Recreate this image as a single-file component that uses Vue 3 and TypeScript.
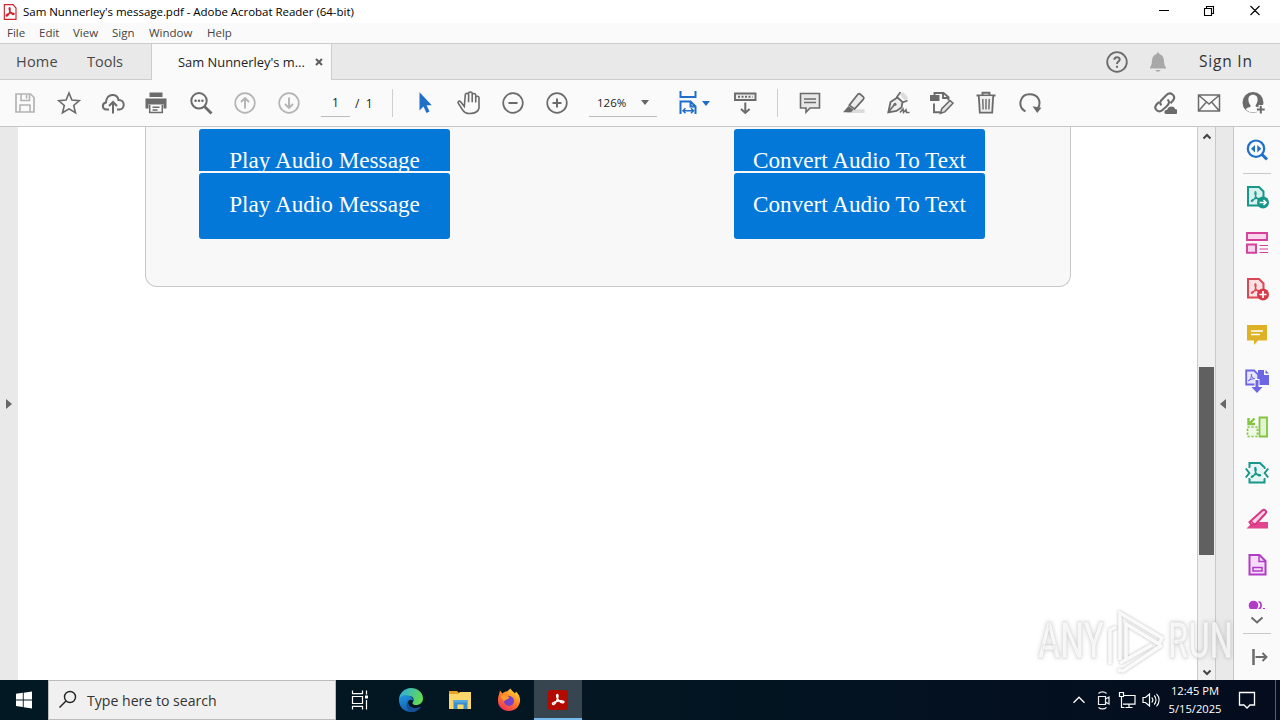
<script setup lang="ts">
import { h } from 'vue'

type Shape = { d: string; f?: string; s?: string; w?: number; dash?: string }

const G = '#6b6b6b'
const L = '#b4b4b4'
const B = '#1f6fc9'
const line = (d: string, s = G, w = 1.7, f = 'none', dash?: string): Shape => ({ d, s, w, f, dash })
const fill = (d: string, f = G): Shape => ({ d, f })
const ring = (cx: number, cy: number, r: number) =>
  `M${cx - r} ${cy}a${r} ${r} 0 1 0 ${2 * r} 0a${r} ${r} 0 1 0 ${-2 * r} 0z`
const trefoil = 'M10.300 6.500c-1 .2-.3 3.200.5 5s2.800 3.600 4.600 3.200c1.200-.7-1.800-1.700-4-1.300s-5.400 1.600-5.200 2.700c1.200 1.200 3.400-2.200 4.200-4.400s1.100-5.100-.1-5.200z'

const icons: Record<string, Shape[]> = {
  app: [line('M3.500 1h13l4.500 5v17h-17.500z', '#c9252d', 1.700, '#fff'), line('M11.500 5.500c-1.800.5-.5 4.500 1 6.500s4 4.500 5.500 3.500-2-2.500-5-2-7.500 2.500-7 4 3 .5 4.500-3 2.500-8.500 1-9z', '#c9252d', 1.900)],
  save: [line('M3 3h14.500l3.500 3.500v14.500h-18z', L), line('M8 3v6.500h8.500v-6.500M13.500 4v3.500M7 21v-7h10v7', L, 1.600)],
  star: [line('M12 2l2.900 7 7.500.6-5.700 4.900 1.800 7.300-6.500-3.900-6.500 3.900 1.800-7.300-5.700-4.900 7.500-.6z', G, 1.600)],
  cloud: [line('M8 18.500H5.500C.8 18.200.7 12.300 5 11.500 5 2.500 16.500 1.300 17.500 9c6.500-.5 7 9 1.200 9.500H16', G, 2), line('M12 22.500V11.500M8 15l4-4 4 4', G, 2)],
  print: [fill('M4.500 1.500h13v4.500h-13zM.5 7.500h21v10h-3v-4h-15v4h-3z'), line('M4.700 14v7.500h12.600V14M7.500 16.300h7M7.500 19h5', G, 1.500)],
  find: [line(ring(10, 9.800, 7.700), G, 2), line('M15.500 15.500l7 7', G, 2.800), fill(ring(6.600, 9.800, 1.300)), fill(ring(10, 9.800, 1.300)), fill(ring(13.400, 9.800, 1.300))],
  up: [line(ring(12, 12, 9.800), L), line('M12 17.500V7M8 11l4-4 4 4', L, 1.900)],
  down: [line(ring(12, 12, 9.800), L), line('M12 6.500V17M8 13l4 4 4-4', L, 1.900)],
  cursor: [fill('M6.500 1.200V19.500l4-4 3 6.500 3-1.500-2.900-6.300h5.200z', B)],
  hand: [line('M7.300 15.500L3.800 11c-1.500-2-3.500-.2-2.300 1.600l4.300 6.600c3 4.800 14.700 4.500 16.200-2.200V7c0-2.300-3.300-2.300-3.300 0v4.500V4.200c0-2.300-3.500-2.300-3.500 0v7V2.600c0-2.200-3.600-2.200-3.600 0v8.600V4c0-2.300-3.300-2.300-3.300 0z', G, 1.600)],
  minus: [line(ring(12, 12, 9.800)), line('M7.500 12h9', G, 2)],
  plus: [line(ring(12, 12, 9.800)), line('M7.500 12h9M12 7.500v9', G, 2)],
  fit: [line('M2.500 0v6h15V0M2.500 23V10.500h10l5 5V23M12.500 10.500v5h5', B, 2), line('M5 19.800h10.500M7.500 17.300L5 19.800l2.500 2.500M13 17.300l2.500 2.500-2.500 2.500', B, 1.500)],
  measure: [line('M2 2.500h20.500v6.500H2z', G, 1.900, '#eee'), line('M5 5.800h14.500', G, 2, 'none', '2 1.500'), line('M12.300 11.500v10.300M8 18l4.300 4 4.300-4', G, 2)],
  comment: [line('M2.500 2.500h19V17h-9.500l-4 4.300V17H2.500z', G, 1.600, '#e7e7e7'), line('M6 8h12M6 11.500h12', G, 1.500)],
  marker: [fill('M5 19l17.500-1v4H5z', '#dcdcdc'), line('M18 3l3.300 2.800c1 1 .5 2 0 2.600L12.500 18l-5.200-3.800 8-10.200c.8-1.200 2-1.600 2.700-1z', G, 1.700, '#ececec'), fill('M6.500 15l5 3.800-2.500 2.500H1z')],
  sign: [fill('M13.500 3.500L17 1l5.500 6-3.500 2.500z', '#dcdcdc'), line('M11.500 6.500L16.500 11l-1 5.500-5 3.500-8.200 1.300L4.500 11z', G, 1.800, '#eee'), line('M2.500 21l6-7.500M10.500 6.500L14.500 1M16.500 11.500l5-2', G, 1.700), fill(ring(9, 13.300, 1.500)), line('M14 21.500l3-3.500.5 3.300 2.500-2.500.5 2.700h3', G, 1.500)],
  edit: [fill('M0 4h9.500v6H0z'), line('M4.500 4V2h9l5 4.200V9.500M13 2v5h5.500M4 12.500v8.800h6', G, 1.900), line('M20 9.500l3 2.700-8.200 8.700-4.300 1.400 1.300-4.700z', G, 1.600, '#e5e5e5')],
  trash: [line('M2.500 4.500h19M8.500 4V1.800h7V4', G, 1.900), line('M4.800 5l1 16.700h12.400l1-16.700', G, 1.800, '#eee'), line('M8.800 8l.3 10.500M12 8v10.500M15.200 8l-.3 10.500', G, 1.400)],
  redo: [line('M7.500 20.500C-1.500 15 2.500 3.200 11.500 3.200s12 7.500 8.500 14', G, 2), fill('M14.500 15.300l9 1.500-4.300 5.200z')],
  link: [line('M8.500 14.200c-2.500-2.300-1-4.200 1-6.200l4-4c4-4 10 1 6.500 5.500l-2.500 2.700M14.500 8.500c3 2.500 1 5-1 7l-4 3.500c-4 3.500-9.500-1-6-5.500L6 11', G, 2.100), line('M14 22c-2-.8-1-2.800.8-2.500.8-3.500 5.800-3.500 6.700-.5 2 0 2.300 2.700.5 3z', '#fafafa', 4), fill('M13 23c-3-1-1.500-4.300 1.200-4.200.8-4 7-4.300 7.800-.8 3.500 0 3.500 4.500 1 5z')],
  mail: [line('M1.500 4h21v16h-21zM2 4.500l10 8.500 10-8.500M2 19.500l7-8M22 19.500l-7-8', G, 1.500)],
  user: [fill(ring(12, 11.500, 10.500)), fill('M12 3.800c3.300 0 4.800 2.400 4.600 5.200-.2 2.500-1 3.800-1.900 4.900-.6 1.300.3 1.900 2.300 2.500l1.500.8-1.500 3c-3.200 1.700-7 1.700-10 0-.9-.5-1.700-1.200-2.300-2 .9-1 2.100-1.400 3.500-1.900 1.500-.6 1.800-1.300 1.100-2.400-1-1.100-1.700-2.500-1.900-4.900-.2-2.800 1.300-5.200 4.600-5.200z', '#fafafa'), line('M19.800 14v9M15.300 18.500h9', '#fafafa', 4.500), line('M19.800 14.700v7.800M15.900 18.600h7.800', G, 2)],
  help: [line(ring(12, 12, 9.800), G, 1.800), line('M9.300 9.800c0-3.500 5.600-3.300 5.400-.2-.2 2-2.700 2-2.700 4.300M12 15.800v2', G, 2)],
  bell: [fill('M12 2.500c1 0 1.300.8 1.300 1.500 7 2 3 9.500 6.700 13.500v1H4v-1C7.700 13.500 3.700 6 10.700 4c0-.7.300-1.500 1.300-1.500zM9.500 20h5c-.5 2.200-4.500 2.200-5 0z', '#a8a8a8')],
  navFind: [line(ring(11, 10.700, 8.200), B, 2.200), line('M17 16.500l5 5', B, 3), fill('M10 7v7.500L6 10.700zM12.300 7v7.500l4-3.800z', B)],
  exportPdf: [line('M3 2h11l4.500 4.500v14H3z', '#17968a', 2, '#d8f0ee'), line(trefoil, '#17968a', 1.100), fill(ring(18, 17.500, 6), '#17968a'), line('M14.500 17.500h6.500M18.500 15l2.500 2.500-2.500 2.500', '#fff', 1.600)],
  organize: [line('M2 2h20v7H2zM2 13.500h9v8.300H2z', '#d5419a', 1.900, '#fad6ed'), line('M14.500 14.500h8.500M14.500 18h8.500M14.500 21.500h8.500', '#d5419a', 1.200)],
  create: [line('M3 2h11l4.500 4.500v14H3z', '#db4654', 2, '#fce1e2'), line(trefoil, '#db4654', 1.100), fill(ring(18, 17.500, 6), '#d73b49'), line('M14.500 17.500h7M18 14v7', '#fff', 1.700)],
  note: [fill('M2 2h20v15.500H13l-4 4.500v-4.500H2z', '#dfb126'), line('M6 8h12M6 11.500h9', '#fff', 1.500)],
  combine: [fill('M13 1h6v5h5v10h-11z', '#6c65e4'), fill('M20.500 1l3.500 3.500h-3.500z', '#6c65e4'), line('M1.200 1.500h8l4 4V15.500h-12z', '#6c65e4', 1.800, '#e7e5fc'), line('M6.500 5c-.8.500.6 4.500 3.300 5-.8-.8-5 .4-6.500 1.700 1.700.7 3.500-4.500 3.200-6.700z', '#6c65e4', 1), line('M12 10v12', '#fafafa', 5), line('M12 11v10', '#6c65e4', 3), fill('M6.500 18h11L12 24z', '#6c65e4')],
  compress: [line('M14.500 2.500h7.500v19h-7.500z', '#83c441', 1.800, '#e1f5d0'), line('M2.500 12h10v9.500h-10z', '#83c441', 1.700, '#eef9e4', '2.200 1.700'), line('M9.500 3.500L5 8M3.500 3v6h6.500', '#83c441', 2.400)],
  optimize: [line('M4.500 7V2h10.500l4.500 4.500V8M4.500 17v4.500h15V17', '#17968a', 2, '#e5f5f3'), fill('M5.500 6.500h13v11.500h-13z', '#e5f5f3'), line(trefoil, '#17968a', 1.300), line('M.8 7.500l3.500 4.500-3.500 4.500M23.200 7.500l-3.500 4.500 3.500 4.500', '#17968a', 2)],
  redact: [fill('M14 15h9v6.500H1.500l4-4z', '#e0458d'), line('M17.300 3.500c2-2 5 .7 3.200 3L11 16.800l-4.500 1-2-2.700z', '#d93782', 2, '#fbd5e7'), line('M6 14l4 4', '#d93782', 1.500)],
  form: [line('M4.500 2h10l6 6v13.500h-16z', '#b13bc7', 2, '#f5ddf9'), line('M14 2v6.500h6', '#b13bc7', 1.500), line('M8 14.500h9v3.500H8z', '#b13bc7', 1.500)],
  more: [fill(ring(8.500, 5.500, 4.800), '#b13bc7'), line('M13.500 1.500c3.500 1 3.500 6.500 0 8', '#b13bc7', 1.700), fill('M18 8h2v2h-2z', '#b13bc7')],
  chevron: [line('M6.500 8.500l5.500 5 5.500-5', G, 2)],
  leave: [line('M8.500 4v16', G, 2.500), line('M10.500 12h11M17.500 8l4 4-4 4', G, 1.900)],
  windows: [fill('M4 5.800l6.800-1v6.600H4zM11.700 4.700L20 3.500v7.900h-8.300zM4 12.400h6.800V19L4 18zM11.700 12.400H20v8l-8.300-1.200z', '#fff')],
  search: [line(ring(14, 9, 5.500), '#222', 1.400), line('M10 13l-6.500 6.500', '#222', 1.400)],
  tasks: [line('M4.500 2.500v3.200h10V2.500M4.500 8.500h10v7h-10zM4.500 21.500v-3.200h10v3.200M18.500 2.500v4M18.500 12v9.500', '#fff', 1.200), fill('M17 7.500h3v3h-3z', '#fff')],
  chev: [line('M6.500 14.700l5.500-5.500 5.500 5.500', '#fff', 1.300)],
  camera: [line('M7.500 8.500h7v8h-7zM14.500 11l3.500-2v7l-3.500-2M7.500 5.500c2-2.200 6-2.200 8 0M7.500 19.300c2 2.200 6 2.200 8 0', '#eee', 1.200)],
  network: [line('M9 7.500h11v8.700H8M14 16.500v3M10.500 19.500h7M4.500 4.500h4v4h-4zM6.500 8.500v11h3', '#fff', 1.200)],
  sound: [line('M4 9.500h2.500l4-3.500v12l-4-3.500H4z', '#fff', 1.200), line('M12.800 9.500c1.300 1.500 1.300 3.500 0 5M15.200 7.500c2.400 2.500 2.400 6.500 0 9M17.500 5.800c3.500 3.500 3.500 9 0 12.500', '#fff', 1.100)],
  notice: [line('M4.500 4.500h15v12.500h-4.500l-3 3-3-3h-4.500z', '#fff', 1.300)],
}

const Icon = (p: { name: string; size?: number }) =>
  h('svg', { width: p.size ?? 24, height: p.size ?? 24, viewBox: '0 0 24 24' },
    icons[p.name].map(s => h('path', { d: s.d, fill: s.f ?? 'none', stroke: s.s ?? 'none', 'stroke-width': s.w ?? 0, 'stroke-dasharray': s.dash })))
Icon.props = ['name', 'size']

const menus = ['File', 'Edit', 'View', 'Sign', 'Window', 'Help']
const fileTools = ['save', 'star', 'cloud', 'print', 'find', 'up', 'down']
const viewTools = ['cursor', 'hand', 'minus', 'plus']
const editTools = ['comment', 'marker', 'sign', 'edit', 'trash', 'redo']
const shareTools = ['link', 'mail', 'user']
const sideTools = ['exportPdf', 'organize', 'create', 'note', 'combine', 'compress', 'optimize', 'redact', 'form']
const actions = ['Play Audio Message', 'Convert Audio To Text']
</script>

<template>
  <div class="screen">
    <header class="title">
      <Icon name="app" :size="16" />
      <span class="title-text">Sam Nunnerley's message.pdf - Adobe Acrobat Reader (64-bit)</span>
      <div class="win-buttons">
        <svg width="108" height="24" viewBox="0 0 108 24" fill="none" stroke="#000">
          <path d="M0 10.500h10M45.500 8.500h7v7h-7zM47.500 8.500v-2h7v7h-2M91.500 6l9 9M100.500 6l-9 9" stroke-width="1.100" />
        </svg>
      </div>
    </header>
    <nav class="menu"><span v-for="m in menus" :key="m" :class="'menu-' + m.toLowerCase()">{{ m }}</span></nav>
    <div class="tabs">
      <span class="tab home">Home</span>
      <span class="tab tools">Tools</span>
      <div class="active-tab">
        <span>Sam Nunnerley's m...</span>
        <svg width="8" height="8" viewBox="0 0 8 8"><path d="M1 1l6 6M7 1L1 7" stroke="#5c5c5c" stroke-width="1.900" /></svg>
      </div>
      <div class="account"><Icon name="help" /><Icon name="bell" /><span class="signin">Sign In</span></div>
    </div>
    <div class="toolbar">
      <div class="group"><button v-for="t in fileTools" :key="t"><Icon :name="t" /></button></div>
      <div class="page-no">1</div><span class="page-count">/&nbsp; 1</span>
      <i class="divider"></i>
      <div class="group view-tools"><button v-for="t in viewTools" :key="t"><Icon :name="t" /></button></div>
      <div class="zoom"><span>126%</span><i class="caret"></i></div>
      <div class="fit"><Icon name="fit" /><i class="caret blue"></i></div>
      <div class="measure"><Icon name="measure" /></div>
      <i class="divider second"></i>
      <div class="group edit-tools"><button v-for="t in editTools" :key="t"><Icon :name="t" /></button></div>
      <div class="group share"><button v-for="t in shareTools" :key="t"><Icon :name="t" /></button></div>
    </div>
    <main class="body">
      <div class="rail left"><i class="arrow right-arrow"></i></div>
      <section class="doc">
        <div class="card">
          <div v-for="a in actions" :key="a" class="stack">
            <div class="action clipped">{{ a }}</div>
            <div class="action">{{ a }}</div>
          </div>
        </div>
      </section>
      <div class="scroll">
        <svg width="10" height="7" viewBox="0 0 10 7"><path d="M1.500 5.500L5 2l3.500 3.500" fill="none" stroke="#444" stroke-width="2" /></svg>
        <div class="thumb"></div>
        <svg class="bottom" width="10" height="7" viewBox="0 0 10 7"><path d="M1.500 1.500L5 5l3.500-3.500" fill="none" stroke="#444" stroke-width="2" /></svg>
      </div>
      <div class="rail right"><i class="arrow left-arrow"></i></div>
      <aside class="side">
        <div class="cell"><Icon name="navFind" /></div>
        <hr />
        <div v-for="t in sideTools" :key="t" class="cell"><Icon :name="t" /></div>
        <div class="cell partial"><Icon name="more" /></div>
        <div class="cell expand"><Icon name="chevron" /></div>
        <hr />
        <div class="cell"><Icon name="leave" /></div>
      </aside>
    </main>
    <svg class="watermark" width="204" height="70" viewBox="0 0 204 70">
      <g class="mark-text">
        <text x="2" y="52" textLength="66" lengthAdjust="spacingAndGlyphs">ANY</text>
        <text x="132" y="52" textLength="65" lengthAdjust="spacingAndGlyphs">RUN</text>
      </g>
      <g class="mark-logo">
        <path d="M74 58V24l6-3M84 54V7l42 25-3 6-33-20v36M84 57l32-18M82 64l5 1 39-26" />
      </g>
    </svg>
    <footer class="taskbar">
      <div class="start"><Icon name="windows" /></div>
      <div class="searchbox"><Icon name="search" /><span>Type here to search</span></div>
      <div class="task view-task"><Icon name="tasks" /></div>
      <div class="task">
        <svg width="26" height="26" viewBox="0 0 26 26">
          <defs>
            <linearGradient id="eg" x1="0" y1="0" x2="1" y2=".3"><stop stop-color="#28a9e8" /><stop offset="1" stop-color="#62d957" /></linearGradient>
            <linearGradient id="eb" x1="0" y1="0" x2=".6" y2="1"><stop stop-color="#2297e2" /><stop offset="1" stop-color="#1258a8" /></linearGradient>
          </defs>
          <path d="M1 13C1 6 6.500 1 13 1s12 4.500 12 10.500c0 4-3 6.500-7 6.500-3.200 0-4.200-1.500-3-3 1.800-3-.5-6-4-6C6 9 1.500 11 1 13z" fill="url(#eg)" />
          <path d="M1 13c.5-3.500 5-5.500 9-4.500 3.500.5 5 3 5 5-3.500-2-6 1-4.500 4 2 4.500 8.500 4.500 12.500 2C21 23 17.500 25 13 25 6 25 1 20 1 13z" fill="url(#eb)" />
          <path d="M10.500 17.500c2 4.500 8.500 4.500 12.500 2-2 3.500-5.500 5.500-9 5.500-5-1-7-7-4-11.500-.5 1.500-.2 2.800.5 4z" fill="#164f95" />
        </svg>
      </div>
      <div class="task">
        <svg width="24" height="24" viewBox="0 0 24 24">
          <path d="M1 3h8l2 2v15H1z" fill="#e8a22a" /><path d="M1 6h9l2-2h11v17H1z" fill="#fbd668" />
          <path d="M5.500 21v-9h14v9h-4v-4.500h-6V21z" fill="#3a8fd0" /><path d="M5.500 12h14v2.500h-14z" fill="#55a9df" />
        </svg>
      </div>
      <div class="task">
        <svg width="26" height="26" viewBox="0 0 26 26">
          <defs><linearGradient id="ff" x1=".8" y1="0" x2=".2" y2="1"><stop stop-color="#ffe13c" /><stop offset=".5" stop-color="#ff7a25" /><stop offset="1" stop-color="#f42c64" /></linearGradient></defs>
          <path d="M3 7.500l1-4 2.500 3C8 5 9.500 4.500 11 4.500l3.500-3c.5 2 3 3 4.500 5l1-2c3 3 4.500 6 4 10-1 6-5.500 9.500-11 9.500C6.500 24 2 19.500 2 14c0-2.500 0-4 1-6.500z" fill="url(#ff)" />
          <circle cx="13" cy="14" r="5" fill="#7542c9" /><path d="M5 9c2-1.500 4.500 0 6.500.2 2.500.3 2 2.300-.5 3-1.500.5-1.500 2-3.500 1.500C6.500 12.500 5 11 5 9z" fill="#ff9a2d" />
        </svg>
      </div>
      <div class="task active">
        <svg width="22" height="22" viewBox="0 0 22 22"><rect x=".5" y="1" width="20.500" height="20" rx="3.500" fill="#b30b00" /><path d="M10.500 5.500c-1.500 0-1 3 .5 5s4 3.700 5.500 3-.5-2-3.500-1.700-8 1.700-7.500 3.200 3-.2 4-2.700 2.500-6.300 1-6.800z" fill="none" stroke="#fff" stroke-width="1.400" /></svg>
      </div>
      <div class="tray">
        <Icon name="chev" /><Icon name="camera" /><Icon name="network" /><Icon name="sound" />
        <div class="clock"><span>12:45 PM</span><span class="date">5/15/2025</span></div>
        <Icon name="notice" />
        <i class="peek"></i>
      </div>
    </footer>
  </div>
</template>

<style>
html, body { margin: 0; overflow: hidden; }
</style>

<style scoped>
* { box-sizing: border-box; }
.screen { position: relative; width: 1280px; height: 720px; display: flex; flex-direction: column; overflow: hidden; background: #fff; font-family: "Open Sans", "Noto Sans", sans-serif; color: #222; }
svg { display: block; flex: none; }
span { white-space: nowrap; }
.title { height: 23px; display: flex; align-items: center; padding-left: 2px; font-size: 11.5px; letter-spacing: -.03px; color: #000; }
.title-text { margin-left: 5px; }
.win-buttons { margin-left: auto; width: 121px; }
.menu { height: 20px; display: flex; background: #fafafa; font-size: 11.5px; line-height: 20px; color: #444; padding-left: 7px; }
.menu span { flex: none; }
.menu .menu-file { width: 32px; }
.menu .menu-edit { width: 34px; }
.menu .menu-view { width: 39px; }
.menu .menu-sign { width: 37px; }
.menu .menu-window { width: 58px; }
.tabs { height: 37px; display: flex; background: #e9e9e9; border-top: 1px solid #cdcdcd; border-bottom: 1px solid #cdcdcd; line-height: 35px; }
.tab { font-size: 14.5px; color: #484848; }
.home { width: 71px; margin-left: 16px; letter-spacing: .2px; }
.tools { width: 64px; }
.active-tab { width: 181px; height: 36px; background: #fafafa; border: solid #cdcdcd; border-width: 0 1px; display: flex; align-items: center; justify-content: space-between; padding: 0 8px 0 26px; font-size: 12.9px; }
.account { margin-left: auto; display: flex; align-items: center; width: 175px; }
.account svg:nth-child(2) { margin-left: 17px; }
.signin { margin-left: 29px; font-size: 15.5px; letter-spacing: .8px; color: #333; }
.toolbar { height: 47px; background: #fafafa; border-bottom: 1px solid #c6c6c6; display: flex; align-items: center; padding-left: 3px; }
.group { display: flex; }
button { width: 44px; height: 44px; padding: 0; border: 0; background: none; display: flex; align-items: center; justify-content: center; }
.page-no { width: 29px; height: 28px; margin-left: 10px; border-bottom: 1px solid #bcbcbc; text-align: center; font-size: 12px; line-height: 28px; }
.page-count { margin-left: 5px; width: 38px; font-size: 12px; }
.divider { width: 1px; height: 28px; background: #cfcfcf; margin-left: -1px; }
.view-tools { margin-left: 10px; }
.zoom { width: 68px; height: 28px; margin-left: 10px; border-bottom: 1px solid #bcbcbc; display: flex; align-items: center; justify-content: space-between; padding: 0 8px; font-size: 11.5px; }
.caret { border: 4px solid transparent; border-top: 5px solid #666; border-bottom: 0; }
.caret.blue { border-top-color: #1f6fc9; }
.fit { display: flex; align-items: center; margin-left: 21px; width: 55px; }
.second { margin-left: 20px; }
.edit-tools { margin-left: 10px; }
.share { margin-left: auto; padding-right: 5px; }
.body { height: 553px; display: flex; }
.rail { width: 18px; background: #e9e9e9; display: flex; align-items: center; justify-content: center; }
.arrow { border: 5px solid transparent; }
.right-arrow { border-left: 6px solid #666; border-right: 0; }
.left-arrow { border-right: 6px solid #666; border-left: 0; margin-right: 3px; }
.doc { width: 1179px; background: #fff; }
.card { width: 926px; height: 160px; margin-left: 127px; background: #f8f8f8; border: 1px solid #c9c9c9; border-top: 0; border-radius: 0 0 12px 12px; display: flex; justify-content: space-between; padding: 2px 85px 0 53px; }
.stack { width: 251px; }
.action { height: 66px; border-radius: 3px; background: #0378d8; color: #fff; font: 23.2px/62px "Liberation Serif", serif; text-align: center; white-space: nowrap; }
.clipped { height: 42px; overflow: hidden; margin-bottom: 2px; border-radius: 3px 3px 0 0; }
.scroll { width: 18px; background: #f0f0f0; border-left: 1px solid #ccc; display: flex; flex-direction: column; align-items: center; padding: 6px 0 4px; }
.thumb { width: 15px; height: 188px; margin-top: 227px; background: #606060; }
.bottom { margin-top: auto; }
.right { border: solid #c8c8c8; border-width: 0 1px; width: 19px; }
.side { flex: 1; background: #fafafa; }
.cell { height: 46px; display: flex; align-items: center; justify-content: center; }
.side hr { width: 28px; height: 1px; border: 0; margin: 0 auto; background: #c8c8c8; }
.partial { height: 21px; overflow: hidden; align-items: flex-start; padding-top: 12px; }
.expand { height: 24px; }
.watermark { position: absolute; left: 1036px; top: 606px; overflow: visible; }
.mark-text { font: 500 50px Roboto, sans-serif; fill: rgba(255,255,255,.75); stroke: rgba(190,190,190,.3); stroke-width: .8; filter: drop-shadow(0 0 2px rgba(100,100,100,.4)); }
.mark-logo { fill: none; stroke: rgba(255,255,255,.9); stroke-width: 3.500; filter: drop-shadow(0 0 1.500px rgba(100,100,100,.5)); }
.taskbar { height: 40px; display: flex; background: linear-gradient(90deg, #021822, #031622 50%, #040c1e); color: #fff; }
.start { width: 48px; display: flex; align-items: center; justify-content: center; }
.searchbox { width: 288px; background: #f0f0f0; border: 1px solid #bcbcbc; display: flex; align-items: center; padding-left: 7px; color: #333; font-size: 14.1px; }
.searchbox span { margin-left: 7px; }
.task { width: 48px; margin-left: 1px; display: flex; align-items: center; justify-content: center; }
.view-task { margin: 0 2px 0 0; }
.active { background: #36454f; border-bottom: 2px solid #76b9ed; padding-top: 2px; }
.tray { margin-left: auto; display: flex; align-items: center; width: 213px; }
.clock { width: 56px; margin: 0 12px 0 4px; display: flex; flex-direction: column; align-items: center; font-size: 11.2px; line-height: 18px; }
.peek { width: 1px; height: 40px; background: #56606b; margin-left: 16px; }
</style>
